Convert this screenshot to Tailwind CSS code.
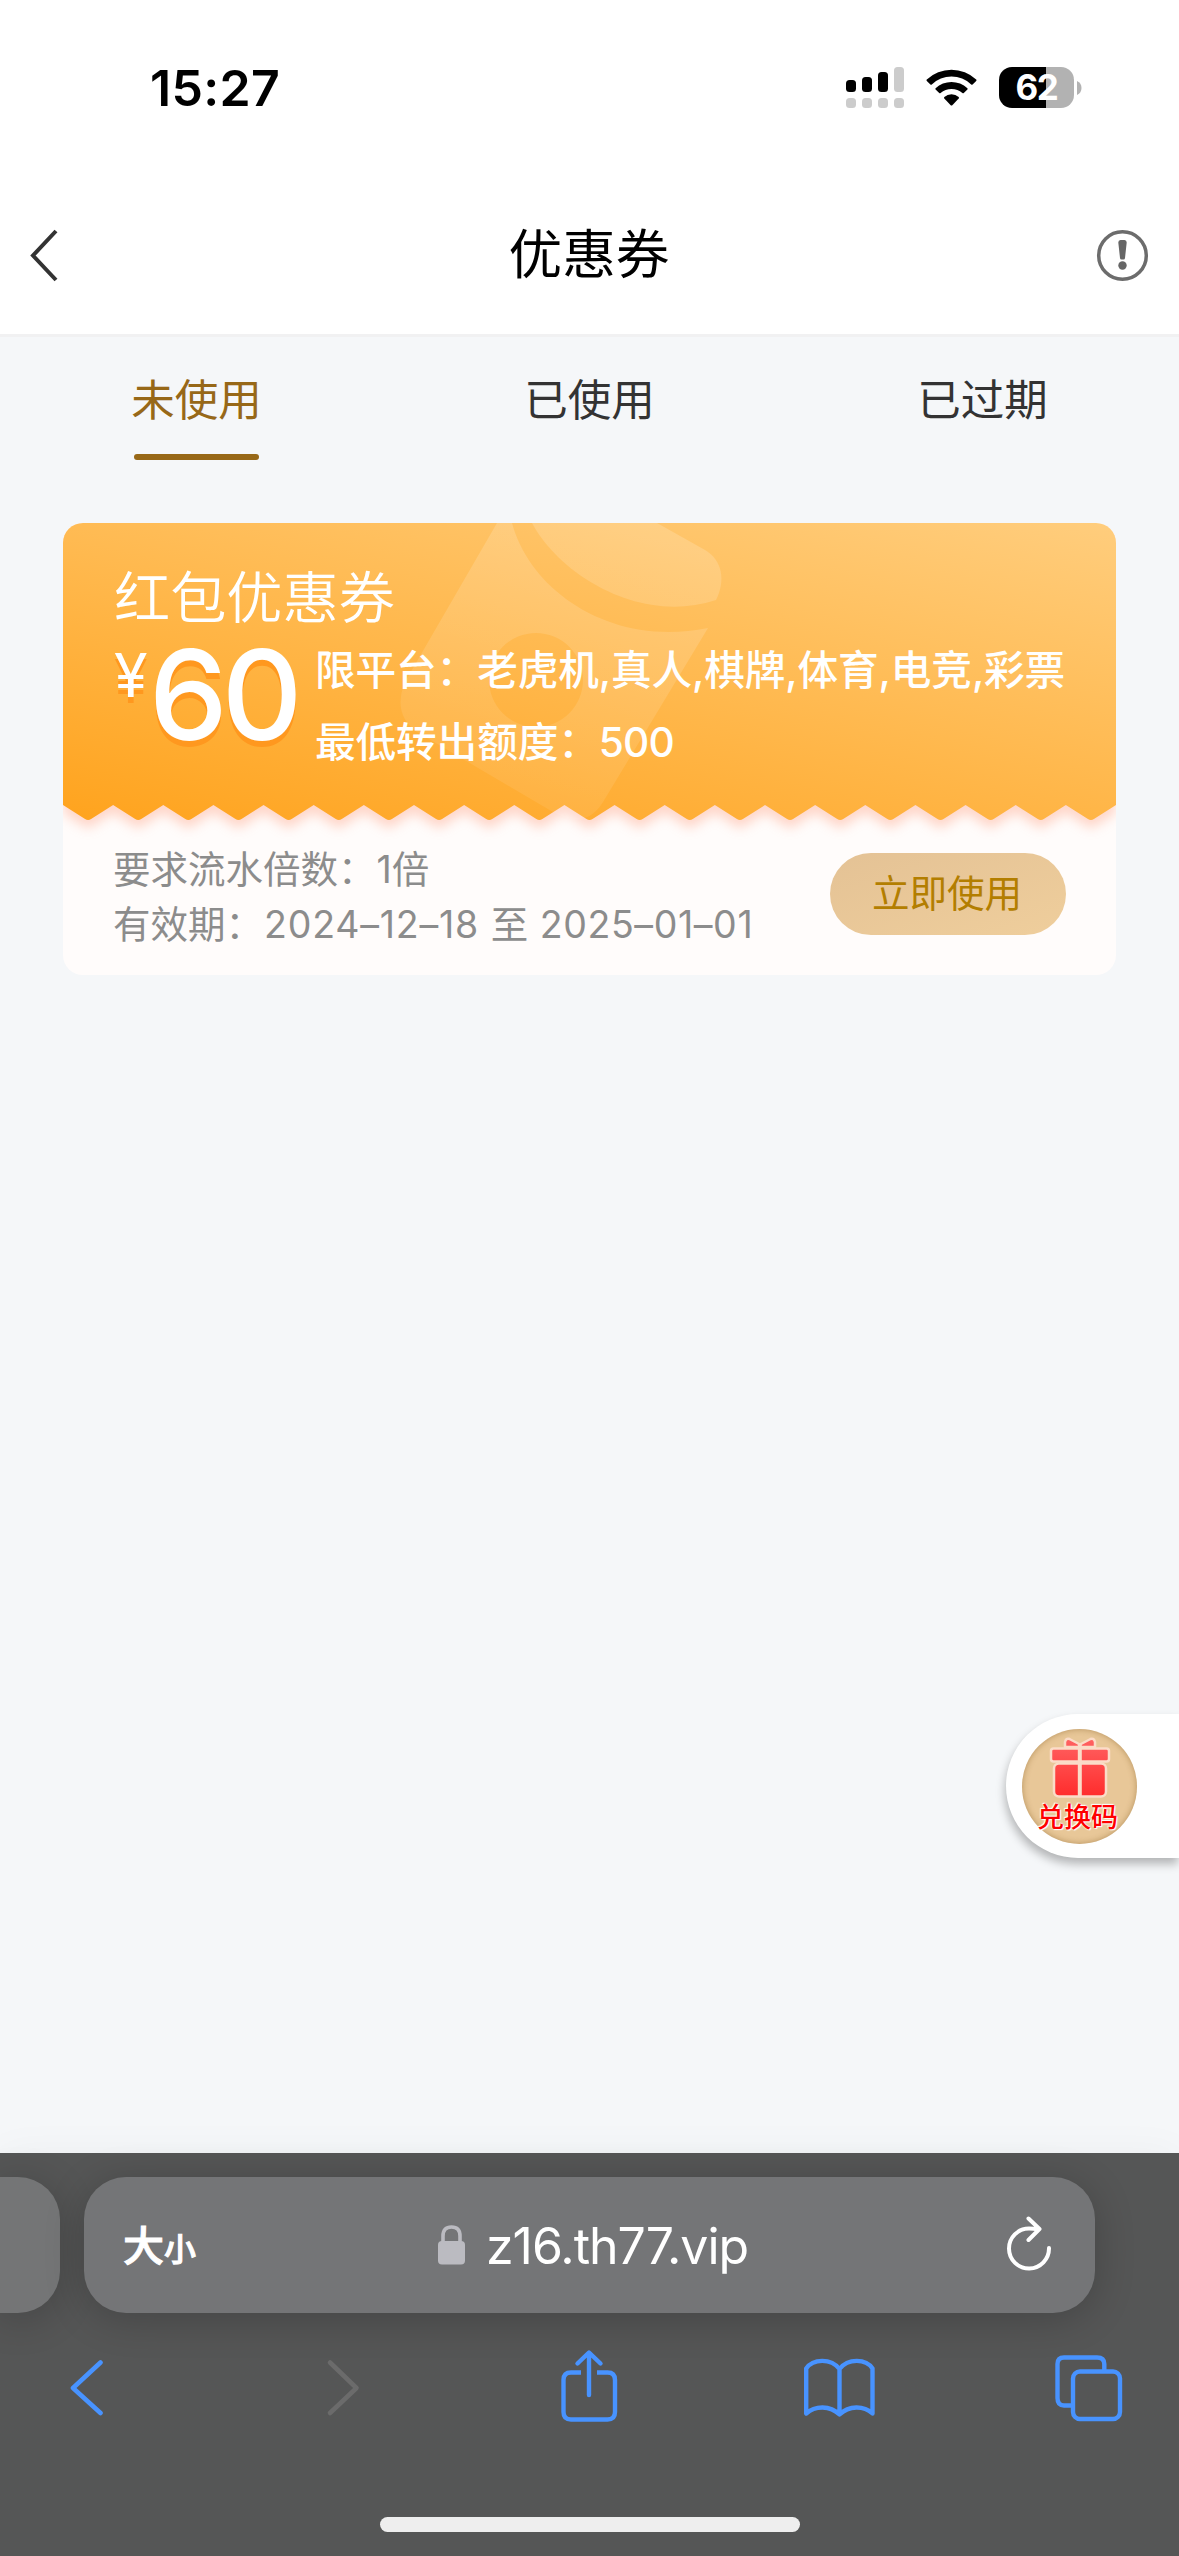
<!DOCTYPE html>
<html lang="zh-CN">
<head>
<meta charset="utf-8">
<title>优惠券</title>
<script src="https://cdn.jsdelivr.net/npm/@tailwindcss/browser@4"></script>
</head>
<body class="font-['Inter','Noto_Sans_CJK_SC',sans-serif] bg-[#f5f7f9]">
<div class="relative flex h-[2556px] w-[1179px] flex-col overflow-hidden bg-[#f5f7f9]">

  <!-- status bar -->
  <div class="flex h-[177px] shrink-0 items-start justify-between bg-white pl-[150px] pr-[97px]">
    <div class="pt-[58px] text-[50px] leading-[60px] font-semibold tracking-[0.300px] text-black">15:27</div>
    <div class="flex items-start pt-[67px]">
      <svg class="h-[41px] w-[58px]" viewBox="0 0 58 41">
        <g fill="#000"><rect x="0" y="13" width="10" height="12" rx="3.5"/><rect x="16" y="10" width="10" height="15" rx="3.5"/><rect x="32" y="5" width="10" height="20" rx="3.5"/></g>
        <g fill="#ccc"><rect x="48" y="0" width="10" height="25" rx="3.5"/><rect x="0" y="31" width="10" height="10" rx="3.5"/><rect x="16" y="31" width="10" height="10" rx="3.5"/><rect x="32" y="31" width="10" height="10" rx="3.5"/><rect x="48" y="31" width="10" height="10" rx="3.5"/></g>
      </svg>
      <svg class="ml-[22px] h-[41px] w-[51px]" viewBox="0 0 51 41">
        <path d="M0.8 12.6 A36 36 0 0 1 50.2 12.6 Q50.8 13.3 50.2 14 L46.6 17.4 Q45.9 18 45.2 17.4 A28.5 28.5 0 0 0 5.8 17.4 Q5.1 18 4.4 17.4 L0.8 14 Q0.2 13.3 0.8 12.6Z"/>
        <path d="M9.6 21.2 A23.5 23.5 0 0 1 41.4 21.2 Q42 21.9 41.4 22.6 L37.8 26 Q37.1 26.6 36.4 26 A16.5 16.5 0 0 0 14.6 26 Q13.9 26.6 13.2 26 L9.6 22.6 Q9 21.9 9.6 21.2Z"/>
        <path d="M18.3 30 A11 11 0 0 1 32.7 30 Q33.3 30.7 32.7 31.4 L26.3 38.2 Q25.5 39 24.7 38.2 L18.3 31.4 Q17.7 30.7 18.3 30Z"/>
      </svg>
      <div class="ml-[22px] flex h-[41px] w-[75px] items-center justify-center rounded-[13px] bg-[linear-gradient(90deg,#000_47px,#b2b2b2_47px)] text-[35px] leading-none font-bold tracking-[-1.500px] text-white">62</div>
      <svg class="ml-[3px] mt-[14px] h-[14px] w-[5px]" viewBox="0 0 5 14"><path fill="#b2b2b2" d="M0 0 Q4.5 2 4.5 7 T0 14Z"/></svg>
    </div>
  </div>

  <!-- page header -->
  <header class="flex h-[160px] shrink-0 items-start justify-between border-b-[3px] border-[#f1f1f2] bg-white pl-[30px] pr-[30px]">
    <svg class="mt-[52px] h-[54px] w-[54px]" viewBox="0 0 54 54" fill="none" stroke="#333" stroke-width="4"><path d="M26 2 L3 26.500 L26 51"/></svg>
    <h1 class="pt-[38px] pr-[1px] text-[53.700px] leading-[80px] text-black">优惠券</h1>
    <svg class="mt-[52px] h-[54px] w-[54px]" viewBox="0 0 54 54"><circle cx="27.500" cy="26.500" r="23.800" fill="none" stroke="#6c6c6c" stroke-width="3.500"/><path fill="#666" d="M23.300 13.500 Q23.300 11 25.500 11 H29.500 Q31.700 11 31.700 13.500 L30 29 Q29.900 30.500 28.500 30.500 H26.500 Q25.100 30.500 25 29Z"/><circle cx="27.500" cy="36.500" r="4.200" fill="#666"/></svg>
  </header>

  <!-- tabs -->
  <nav class="grid h-[186px] shrink-0 grid-cols-3 text-[43.500px] leading-[64px] text-[#333]">
    <div class="flex flex-col items-center pt-[31px] text-[#976818]">未使用<span class="mt-[22px] h-[6px] w-[125px] rounded-full bg-[#976818]"></span></div>
    <div class="flex flex-col items-center pt-[31px]">已使用</div>
    <div class="flex flex-col items-center pt-[31px]">已过期</div>
  </nav>

  <!-- coupon -->
  <section class="relative mx-[63px] flex h-[452px] shrink-0 flex-col overflow-hidden rounded-[20px] bg-[#fffcfb] text-white">
    <svg class="absolute inset-0 h-[452px] w-[1053px]" viewBox="63 523 1053 452">
      <defs>
        <linearGradient id="bg" gradientUnits="userSpaceOnUse" x1="63" y1="812" x2="171" y2="309"><stop offset="0" stop-color="#ffa41f"/><stop offset="1" stop-color="#ffce7f"/></linearGradient>
        <linearGradient id="env" gradientUnits="userSpaceOnUse" x1="620" y1="530" x2="540" y2="820"><stop offset="0" stop-color="#fff" stop-opacity=".17"/><stop offset="1" stop-color="#fff" stop-opacity=".07"/></linearGradient>
        <filter id="soft" x="-5%" y="-20%" width="110%" height="150%"><feGaussianBlur stdDeviation="6"/></filter>
      </defs>
      <path id="glow" fill="#ffc9b8" opacity=".75" filter="url(#soft)"/>
      <path id="ticket" fill="url(#bg)" stroke-linejoin="round"/>
      <path fill="url(#env)" fill-rule="evenodd" d="M497 523 L405 682 Q392 714 417 732 L553 812 Q586 830 603 802 L708 628 C610 648 530 590 512 523Z M583 680 A47 47 0 1 0 489 680 A47 47 0 1 0 583 680Z"/>
      <path fill="url(#env)" d="M532 523 C560 575 640 625 716 600 C726 580 722 560 705 550 L657 523Z"/>
    </svg>
    <div class="relative flex h-[298px] flex-col pl-[51px]">
      <h2 class="pt-[36px] text-[56.200px] leading-[79px] font-[350]">红包优惠券</h2>
      <div class="flex items-start">
        <div class="flex w-[201px] items-start [text-shadow:0_6px_0_#ff981f]">
          <span class="w-[35px] pt-[1px] text-[61px] leading-[72px] font-normal tracking-[-2px]">¥</span>
          <span class="pt-[2px] text-[125px] leading-[109px] font-medium tracking-[-6px]">60</span>
        </div>
        <div class="-mt-[3px] text-[40.660px] leading-[72px] font-medium tracking-[-0.120px] whitespace-nowrap">
          <p>限平台：老虎机,真人,棋牌,体育,电竞,彩票</p>
          <p>最低转出额度：<span class="tracking-[-0.800px]">500</span></p>
        </div>
      </div>
    </div>
    <div class="relative flex items-start justify-between pl-[50px] pr-[50px] text-[37.500px] leading-[55px] text-[#8c8c8c]">
      <div class="pt-[21px] font-[370] whitespace-nowrap">
        <p>要求流水倍数：<span class="pl-px">1</span>倍</p>
        <p class="[word-spacing:1px]">有效期：<span class="pl-px tracking-[0.800px]">2024–12–18</span> 至 <span class="tracking-[0.600px]">2025–01–01</span></p>
      </div>
      <button class="mt-[32px] flex h-[82px] w-[236px] items-center justify-center rounded-full bg-linear-to-br from-[#e4c295] to-[#efce9c] pr-[2px] pb-[1px] text-[37.500px] text-[#b37e00]">立即使用</button>
    </div>
  </section>

  <!-- redeem-code shortcut -->
  <div class="absolute top-[1714px] right-0 flex h-[144px] w-[173px] items-center rounded-l-full bg-white pl-[16px] shadow-[-1px_6px_10px_rgba(0,0,0,0.27)]">
    <div class="flex h-[115px] w-[115px] flex-col items-center rounded-full bg-[#e8c798] pt-[8px] shadow-[inset_0_0_6px_rgba(120,80,20,0.45)]">
      <svg class="h-[64px] w-[64px] shrink-0" viewBox="0 0 64 64">
        <defs><linearGradient id="gift" x1="0" y1="0" x2="0" y2="64" gradientUnits="userSpaceOnUse"><stop offset="0" stop-color="#ff6464"/><stop offset="1" stop-color="#ff2828"/></linearGradient></defs>
        <g fill="url(#gift)" stroke="#fbdcc8" stroke-width="2.500" stroke-linejoin="round">
          <path d="M17 10 V5 Q18 .8 21.500 2 L32 7.500 L42.500 2 Q46 .8 47 5 V10Z"/>
          <rect x="3" y="11.500" width="58" height="13" rx="2.500"/>
          <rect x="6" y="26.500" width="52" height="33" rx="5"/>
        </g>
        <path d="M31.800 7 V60" stroke="#fbdcc8" stroke-width="4"/>
      </svg>
      <span class="-ml-[4px] pt-[2px] text-[27px] leading-[30px] font-medium text-[#f00] [text-shadow:0_0_2px_#fff,1px_1px_1px_#fff,-1px_-1px_1px_#fff]">兑换码</span>
    </div>
  </div>

  <!-- browser toolbar -->
  <footer class="relative mt-auto flex h-[403px] shrink-0 flex-col bg-[#555656] shadow-[0_0_40px_rgba(0,0,0,0.04)]">
    <div class="flex gap-[24px] pt-[24px]">
      <div class="h-[136px] w-[60px] rounded-r-[42px] bg-[#747576] shadow-[0_6px_40px_rgba(0,0,0,0.2)]"></div>
      <div class="flex h-[136px] w-[1011px] items-center rounded-[42px] bg-[#747577] text-white shadow-[0_6px_40px_rgba(0,0,0,0.2)]">
        <div class="flex w-[354px] items-baseline pt-[5px] pl-[39px] font-medium [-webkit-text-stroke:1px_#fff]"><span class="text-[41px] leading-[60px]">大</span><span class="text-[32px] leading-[60px]">小</span></div>
        <svg class="h-[40px] w-[27px]" viewBox="0 0 27 40"><rect y="16" width="27" height="23.500" rx="4" fill="#bbbbc1"/><path d="M5 18 V11 Q5 2 13.500 2 T22 11 V18" fill="none" stroke="#bbbbc1" stroke-width="3.600"/></svg>
        <span class="ml-[21px] w-[519px] pt-[2px] text-[50px] leading-[60px] tracking-[-1px]">z16.th77.vip</span>
        <svg class="-mt-[4px] h-[58px] w-[48px]" viewBox="1005 2214 48 58" fill="none" stroke="#fff" stroke-width="4" stroke-linecap="round" stroke-linejoin="round"><path d="M1049 2248 A20 20 0 1 1 1029 2228.500 Q1034 2228.500 1038 2229.500 M1028.500 2218.500 L1039.500 2229 L1028.500 2240"/></svg>
      </div>
    </div>
    <div class="flex items-center pt-[36px] pl-[70px]">
      <svg class="h-[78px] w-[34px]" viewBox="70 2349 34 78" fill="none" stroke="#4893ff" stroke-width="4.600" stroke-linecap="round" stroke-linejoin="round"><path d="M100.500 2362.500 L73 2388 L100.500 2413"/></svg>
      <svg class="ml-[222px] h-[78px] w-[34px]" viewBox="326 2349 34 78" fill="none" stroke="#6b6b6b" stroke-width="4.600" stroke-linecap="round" stroke-linejoin="round"><path d="M330 2362.500 L356.500 2388 L330 2413"/></svg>
      <svg class="ml-[200px] h-[78px] w-[58px]" viewBox="560 2349 58 78" fill="none" stroke="#4893ff" stroke-width="4.400" stroke-linecap="round" stroke-linejoin="round"><path d="M589 2395 V2353 M577.500 2363.500 L589 2352.500 L600.500 2363.500"/><path stroke-linecap="butt" d="M581 2372.500 H571 Q563.500 2372.500 563.500 2380 V2412 Q563.500 2419.500 571 2419.500 H607.500 Q615 2419.500 615 2412 V2380 Q615 2372.500 607.500 2372.500 H597"/></svg>
      <svg class="ml-[185px] h-[78px] w-[72px]" viewBox="803 2349 72 78" fill="none" stroke="#4893ff" stroke-width="4.400" stroke-linecap="round" stroke-linejoin="round"><path d="M806.200 2368.500 C813 2358.500 831 2358 839.500 2369 C848 2358 866 2358.500 872.500 2368.500 V2413.500 C864 2405.500 849 2405 839.500 2414.500 C830 2405 815 2405.500 806.200 2413.500Z M839.500 2369 V2414"/></svg>
      <svg class="ml-[180px] h-[78px] w-[68px]" viewBox="1055 2349 68 78" fill="none" stroke="#4893ff" stroke-width="4.400"><rect x="1073" y="2371.500" width="47" height="47.500" rx="7"/><path d="M1104.300 2371 V2364 Q1104.300 2357.500 1097 2357.500 H1064 Q1057.500 2357.500 1057.500 2364 V2398 Q1057.500 2405.500 1064 2405.500 H1073"/></svg>
    </div>
    <div class="mx-auto mt-[90px] h-[15px] w-[420px] rounded-full bg-[#eee]"></div>
  </footer>
</div>
<script>
  // Serrated lower edge of the coupon: 21 teeth across the card
  const left = 63, top_ = 523, teeth = 21, step = 1053 / teeth;
  let d = `M${left} ${top_} H1116 V805`;
  for (let i = teeth - 1; i >= 0; i--) {
    const x = left + i * step, mid = x + step / 2;
    d += ` L${mid + 3} 819 Q${mid} 821 ${mid - 3} 819 L${x} 805`;
  }
  document.getElementById('ticket').setAttribute('d', d + 'Z');
  const glow = document.getElementById('glow');
  glow.setAttribute('d', d + 'Z');
  glow.setAttribute('transform', 'translate(0 8)');
</script>
</body>
</html>
